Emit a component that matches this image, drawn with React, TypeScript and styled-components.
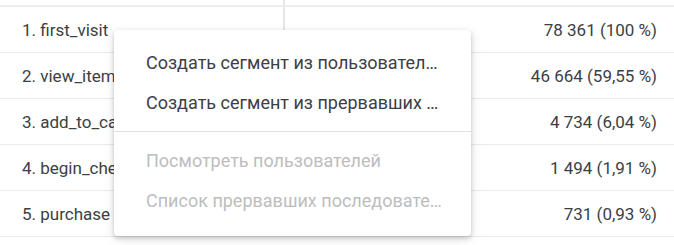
import React from "react";
import styled, { createGlobalStyle } from "styled-components";

const Global = createGlobalStyle`
  html, body { margin: 0; padding: 0; background: #fff; }
  body { font-family: Roboto, "Noto Sans", Arial, sans-serif; }
`;

const Page = styled.div`
  position: relative;
  width: 674px;
  height: 245px;
  overflow: hidden;
  background: #fff;
`;

const Table = styled.div`
  display: grid;
  grid-template-columns: 285px 1fr;
`;

const HeaderCell = styled.div<{ $left?: boolean }>`
  height: 5px;
  border-bottom: 2px solid #eeeeee;
  border-right: ${(p) => (p.$left ? "2px solid #e6e6e6" : "none")};
`;

const Cell = styled.div<{ $left?: boolean }>`
  height: 45px;
  border-bottom: 1px solid #ebebeb;
  border-right: ${(p) => (p.$left ? "2px solid #e6e6e6" : "none")};
  display: flex;
  align-items: center;
  justify-content: ${(p) => (p.$left ? "flex-start" : "flex-end")};
  padding: ${(p) => (p.$left ? "0 0 0 22px" : "0 17px 0 0")};
  font-size: 17px;
  color: #3c4043;
  white-space: nowrap;
`;

const Menu = styled.div`
  position: absolute;
  left: 114px;
  top: 30px;
  width: 357px;
  height: 206px;
  box-sizing: border-box;
  background: #fff;
  border-radius: 4px;
  box-shadow: 0 2px 4px rgba(0, 0, 0, 0.18), 0 3px 12px rgba(0, 0, 0, 0.12);
  padding: 12px 0 16px;
  display: flex;
  flex-direction: column;
`;

const Item = styled.div<{ $disabled?: boolean }>`
  height: 40px;
  display: flex;
  align-items: center;
  padding-left: 32px;
  font-size: 18px;
  color: ${(p) => (p.$disabled ? "#bdbdbd" : "#3c4043")};
`;

const ItemText = styled.span`
  display: block;
  max-width: 298px;
  overflow: hidden;
  text-overflow: ellipsis;
  white-space: nowrap;
`;

const Divider = styled.div`
  height: 1px;
  background: #e0e0e0;
  margin: 9px 0 8px;
`;

const rows = [
  ["1. first_visit", "78 361 (100 %)"],
  ["2. view_item", "46 664 (59,55 %)"],
  ["3. add_to_cart", "4 734 (6,04 %)"],
  ["4. begin_checkout", "1 494 (1,91 %)"],
  ["5. purchase", "731 (0,93 %)"],
];

export default function App() {
  return (
    <Page>
      <Global />
      <Table>
        <HeaderCell $left />
        <HeaderCell />
        {rows.map(([a, b]) => (
          <React.Fragment key={a}>
            <Cell $left>{a}</Cell>
            <Cell>{b}</Cell>
          </React.Fragment>
        ))}
      </Table>
      <Menu>
        <Item>
          <ItemText>Создать сегмент из пользователей, выполнивших шаг</ItemText>
        </Item>
        <Item>
          <ItemText>Создать сегмент из прервавших последовательность</ItemText>
        </Item>
        <Divider />
        <Item $disabled>
          <ItemText>Посмотреть пользователей</ItemText>
        </Item>
        <Item $disabled>
          <ItemText>Список прервавших последовательность</ItemText>
        </Item>
      </Menu>
    </Page>
  );
}
